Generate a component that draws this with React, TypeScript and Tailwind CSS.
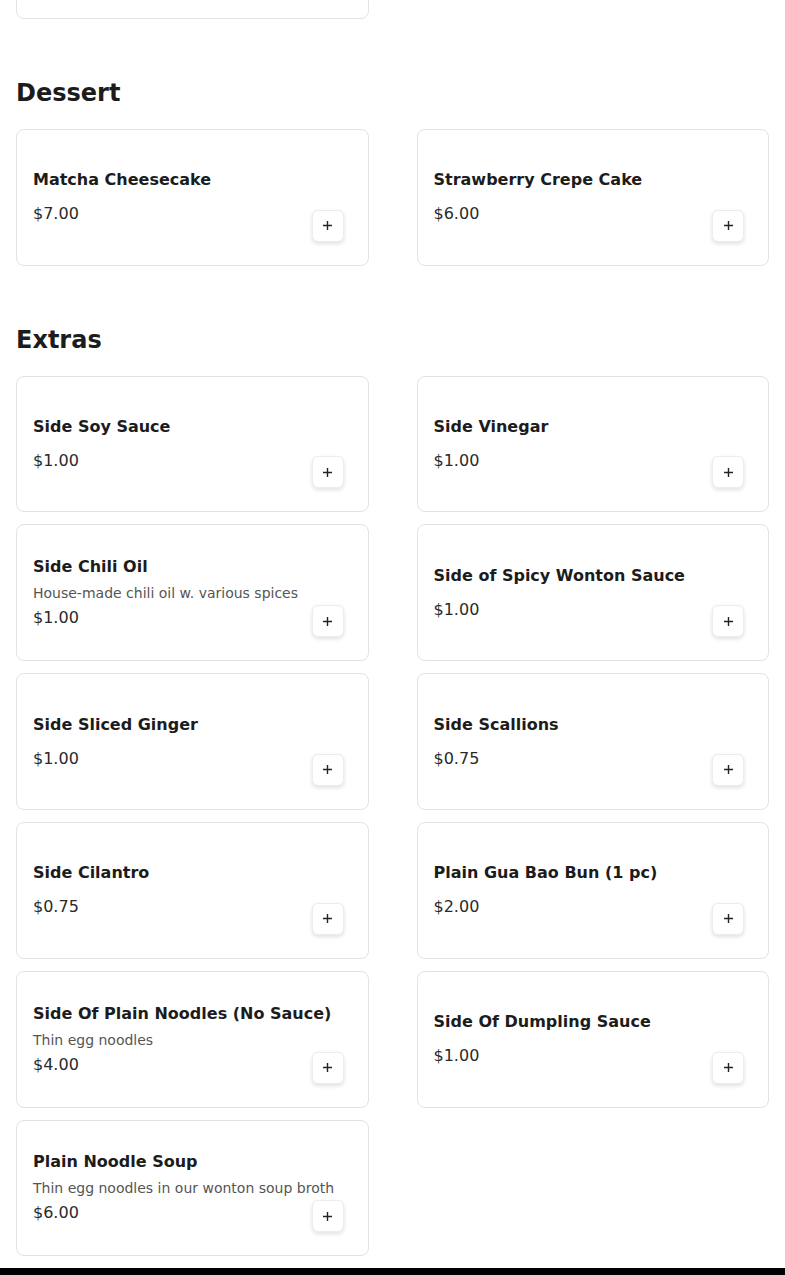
import React from "react";

type Item = { name: string; price: string; desc?: string };

const dessert: Item[] = [
  { name: "Matcha Cheesecake", price: "$7.00" },
  { name: "Strawberry Crepe Cake", price: "$6.00" },
];

const extras: Item[] = [
  { name: "Side Soy Sauce", price: "$1.00" },
  { name: "Side Vinegar", price: "$1.00" },
  { name: "Side Chili Oil", price: "$1.00", desc: "House-made chili oil w. various spices" },
  { name: "Side of Spicy Wonton Sauce", price: "$1.00" },
  { name: "Side Sliced Ginger", price: "$1.00" },
  { name: "Side Scallions", price: "$0.75" },
  { name: "Side Cilantro", price: "$0.75" },
  { name: "Plain Gua Bao Bun (1 pc)", price: "$2.00" },
  { name: "Side Of Plain Noodles (No Sauce)", price: "$4.00", desc: "Thin egg noodles" },
  { name: "Side Of Dumpling Sauce", price: "$1.00" },
  { name: "Plain Noodle Soup", price: "$6.00", desc: "Thin egg noodles in our wonton soup broth" },
];

function PlusButton() {
  return (
    <button className="flex h-8 w-8 shrink-0 items-center justify-center rounded-md border border-[#ececec] bg-white shadow-[0_2px_4px_rgba(0,0,0,0.12)]">
      <svg width="11" height="11" viewBox="0 0 11 11" fill="none">
        <path d="M5.5 1v9M1 5.5h9" stroke="#222" strokeWidth="1.4" />
      </svg>
    </button>
  );
}

function Card({ item }: { item?: Item }) {
  return (
    <div className="grid h-[136.8px] rounded-lg border border-[#e3e3e3] bg-white">
      <div className="col-start-1 row-start-1 flex flex-col justify-center pl-4 pr-2">
        {item && (
          <>
            <div className="whitespace-nowrap text-base font-bold leading-6 text-[#1c1c1c]">{item.name}</div>
            {item.desc ? (
              <>
                <div className="mt-1 whitespace-nowrap text-sm leading-5 text-[#555555]">{item.desc}</div>
                <div className="mt-[3px] text-base leading-6 text-[#2a2a2a]">{item.price}</div>
              </>
            ) : (
              <div className="mt-[10px] text-base leading-6 text-[#2a2a2a]">{item.price}</div>
            )}
          </>
        )}
      </div>
      <div className="col-start-1 row-start-1 mb-[23px] mr-6 self-end justify-self-end">
        <PlusButton />
      </div>
    </div>
  );
}

function Section({ title, items }: { title: string; items: Item[] }) {
  return (
    <section className="mt-[58px]">
      <h2 className="mb-5 text-2xl font-bold leading-8 text-[#1c1c1c]">{title}</h2>
      <div className="grid grid-cols-2 gap-x-12 gap-y-3">
        {items.map((it) => (
          <Card key={it.name} item={it} />
        ))}
      </div>
    </section>
  );
}

export default function App() {
  return (
    <div
      className="min-h-screen overflow-hidden bg-white"
      style={{ fontFamily: '"DejaVu Sans", "Liberation Sans", sans-serif' }}
    >
      <div className="px-4">
        <div className="-mt-[118px] grid grid-cols-2 gap-x-12">
          <Card />
        </div>
        <Section title="Dessert" items={dessert} />
        <Section title="Extras" items={extras} />
      </div>
      <footer className="mt-3 h-[120px] bg-black" />
    </div>
  );
}
